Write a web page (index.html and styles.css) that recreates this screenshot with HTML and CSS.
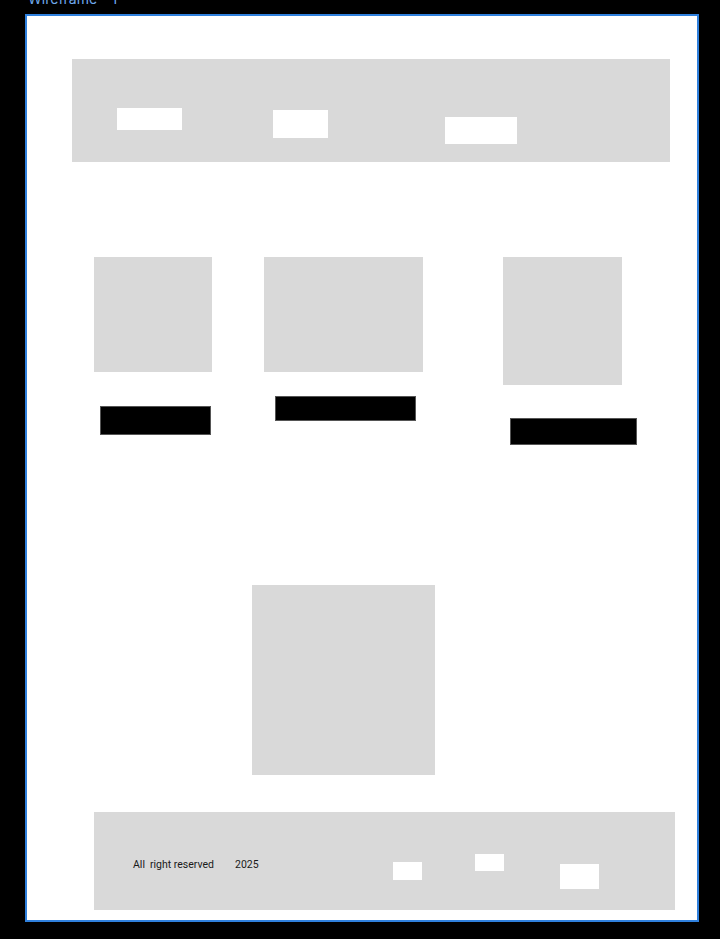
FILE: index.html
```html
<!DOCTYPE html>
<html lang="en">
<head>
  <meta charset="UTF-8">
  <title>Wireframe - 1</title>
  <meta name="viewport" content="width=device-width, initial-scale=1.0">
  <link rel="stylesheet" href="styles.css">
</head>
<body>
  <div class="frame-label">Wireframe - 1</div>
  <div class="frame">
    <!-- top navigation bar -->
    <div class="nav">
      <div class="nav-item nav-item-1"></div>
      <div class="nav-item nav-item-2"></div>
      <div class="nav-item nav-item-3"></div>
    </div>

    <!-- three product cards -->
    <div class="cards">
      <div class="card card-1">
        <div class="card-image"></div>
        <div class="card-btn"></div>
      </div>
      <div class="card card-2">
        <div class="card-image"></div>
        <div class="card-btn"></div>
      </div>
      <div class="card card-3">
        <div class="card-image"></div>
        <div class="card-btn"></div>
      </div>
    </div>

    <div class="feature"></div>

    <div class="footer">
      <div class="footer-note">
        <span>All</span>
        <span class="note-words">right reserved</span>
        <span class="note-year">2025</span>
      </div>
      <div class="footer-link footer-link-1"></div>
      <div class="footer-link footer-link-2"></div>
      <div class="footer-link footer-link-3"></div>
    </div>
  </div>
</body>
</html>
```

FILE: styles.css
```css
body {
  margin: 0;
  background-color: #000000;
  font-family: Inter, "Liberation Sans", sans-serif;
  height: 939px;
  overflow: hidden;
}
.frame-label {
  margin: -9px 0 0 28px;
  font-size: 14px;
  line-height: 16px;
  color: #6fa8ec;
}
.frame {
  box-sizing: border-box;
  width: 674px;
  height: 908px;
  margin: 7px 0 0 25px;
  background-color: #ffffff;
  border: 2px solid #2f80dd;
  display: flex;
  flex-direction: column;
  align-items: flex-start;
}

/* nav bar */
.nav {
  width: 598px;
  height: 103px;
  margin: 43px 0 0 45px;
  background-color: #d9d9d9;
  display: flex;
  align-items: flex-start;
}
.nav-item {
  background-color: #ffffff;
}
.nav-item-1 {
  width: 65px;
  height: 22px;
  margin: 49px 0 0 45px;
}
.nav-item-2 {
  width: 55px;
  height: 28px;
  margin: 51px 0 0 91px;
}
.nav-item-3 {
  width: 72px;
  height: 27px;
  margin: 58px 0 0 117px;
}

/* cards */
.cards {
  display: flex;
  align-items: flex-start;
  margin: 95px 0 0 67px;
}
.card-image {
  background-color: #d9d9d9;
}
.card-btn {
  box-sizing: border-box;
  background-color: #000000;
  border: 1px solid #555555;
}
.card-1 .card-image {
  width: 118px;
  height: 115px;
}
.card-1 .card-btn {
  width: 111px;
  height: 29px;
  margin: 34px 0 0 6px;
}
.card-2 {
  margin-left: 52px;
}
.card-2 .card-image {
  width: 159px;
  height: 115px;
}
.card-2 .card-btn {
  width: 141px;
  height: 25px;
  margin: 24px 0 0 11px;
}
.card-3 {
  margin-left: 80px;
}
.card-3 .card-image {
  width: 119px;
  height: 128px;
}
.card-3 .card-btn {
  width: 127px;
  height: 27px;
  margin: 33px 0 0 7px;
}

.feature {
  width: 183px;
  height: 190px;
  margin: 140px 0 0 225px;
  background-color: #d9d9d9;
}

/* footer */
.footer {
  width: 581px;
  height: 98px;
  margin: 37px 0 0 67px;
  background-color: #d9d9d9;
  display: flex;
  align-items: flex-start;
}
.footer-note {
  width: 259px;
  margin: 46px 0 0 39px;
  display: flex;
  font-family: Roboto, "Liberation Sans", sans-serif;
  font-size: 10.5px;
  line-height: 13px;
  color: #1a1a1a;
}
.note-words {
  margin-left: 5px;
}
.note-year {
  margin-left: 21px;
}
.footer-link {
  background-color: #ffffff;
}
.footer-link-1 {
  width: 29px;
  height: 18px;
  margin: 50px 0 0 1px;
}
.footer-link-2 {
  width: 29px;
  height: 17px;
  margin: 42px 0 0 53px;
}
.footer-link-3 {
  width: 39px;
  height: 25px;
  margin: 52px 0 0 56px;
}
```
